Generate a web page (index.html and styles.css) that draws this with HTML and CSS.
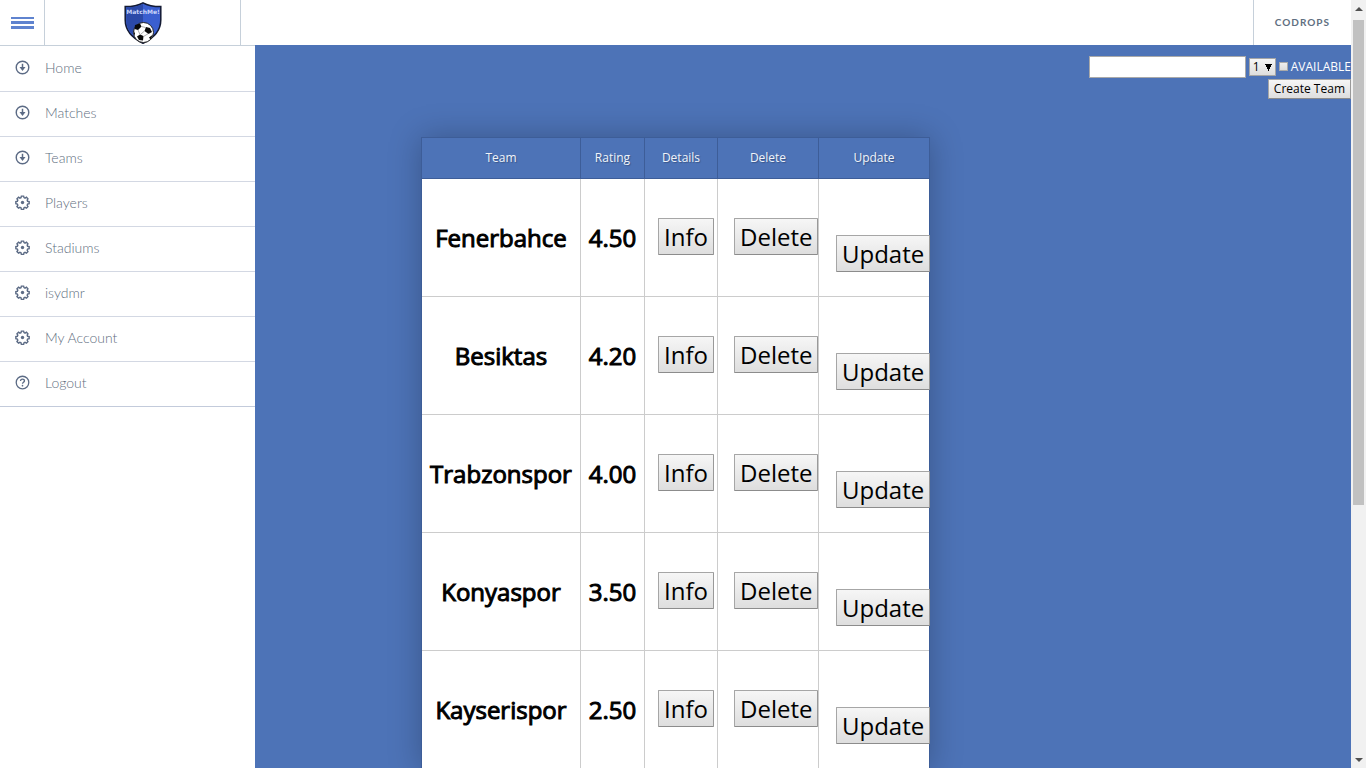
FILE: index.html
```
<!DOCTYPE html>
<html lang="en">
<head>
<meta charset="utf-8">
<title>Teams</title>
<link rel="stylesheet" href="styles.css">
</head>
<body>
<svg class="sprite" aria-hidden="true">
  <symbol id="down" viewBox="0 0 16 16"><circle cx="8" cy="8" r="6.700" fill="none" stroke="currentColor" stroke-width="1.500"/><path d="M7.200 4h1.600v3.400h2.400L8 11.800 4.800 7.400h2.400z" fill="currentColor"/></symbol>
  <symbol id="gear" viewBox="0 0 16 16"><path d="M6.8 1.2h2.4l.4 1.6 1.1.5 1.5-.9 1.6 1.7-.8 1.4.4 1.2 1.7.4v2.2l-1.7.5-.4 1.1.8 1.5-1.6 1.6-1.5-.8-1.1.4-.4 1.7H6.8l-.4-1.7-1.2-.4-1.4.8-1.7-1.6.9-1.5-.5-1.1-1.6-.5V7.1l1.6-.4.5-1.2-.9-1.4 1.7-1.7 1.4.9 1.2-.5z" fill="none" stroke="currentColor" stroke-width="1.500"/><circle cx="8" cy="8" r="1.8" fill="currentColor"/></symbol>
  <symbol id="help" viewBox="0 0 16 16"><circle cx="8" cy="8" r="6.7" fill="none" stroke="currentColor" stroke-width="1.400"/><path d="M5.9 6.5C5.9 3.7 10.2 3.9 10.1 6.3 10 7.7 8 7.7 8 9.4" fill="none" stroke="currentColor" stroke-width="1.400"/><circle cx="8" cy="11.4" r=".9" fill="currentColor"/></symbol>
</svg>
<div class="page">
  <header class="topbar">
    <button class="menu-toggle" aria-label="Menu"><span></span><span></span><span></span></button>
    <a class="brand" href="#">
      <svg viewBox="0 0 38 42" role="img" aria-label="MatchMe!">
        <path d="M19 .8C14 3.6 7.500 4.600 1.200 4.600V18c0 11 7 18 17.800 23.300C30 36 36.800 29 36.800 18V4.600C30.500 4.600 24 3.600 19 .8z" fill="#3a5fd0" stroke="#131a33" stroke-width="1.500"/>
        <path d="M19 2C14 4.500 8 5.500 2.300 5.500V18c0 6 2.200 10.700 6 14.500L19 21z" fill="#2b49a8"/>
        <text x="19" y="12" class="brand-text">MatchMe!</text>
        <circle cx="19.500" cy="30.500" r="10" fill="#fff" stroke="#222" stroke-width="1"/>
        <path d="M11 23l5-1.500 1.500 3-3.500 3.500-3.500-1zM22 25l4 1 2 4-3.500 2-4-3zM16 32.500l3.500 1.500-.5 4.500-4-.500-2-3.500zM9.700 28.500l1.300 3-.8 2.500zM29 32.500l-2.500 5-1.500-2z" fill="#0a0a0a"/>
        <path d="M17.500 24.500l4 1M14 28l2 4.500M20.500 29L16.500 32.500M19.500 34.500l5-3" stroke="#777" stroke-width=".6" fill="none"/>
      </svg>
    </a>
    <a class="codrops" href="#">Codrops</a>
  </header>
  <nav class="sidebar">
    <a href="#"><svg><use href="#down"/></svg>Home</a>
    <a href="#"><svg><use href="#down"/></svg>Matches</a>
    <a href="#"><svg><use href="#down"/></svg>Teams</a>
    <a href="#"><svg><use href="#gear"/></svg>Players</a>
    <a href="#"><svg><use href="#gear"/></svg>Stadiums</a>
    <a href="#"><svg><use href="#gear"/></svg>isydmr</a>
    <a href="#"><svg><use href="#gear"/></svg>My Account</a>
    <a href="#"><svg><use href="#help"/></svg>Logout</a>
  </nav>
  <main class="content">
    <form class="create">
      <div class="fields">
        <input type="text" class="name" aria-label="Team name">
        <select aria-label="Rating"><option>1</option><option>2</option><option>3</option><option>4</option><option>5</option></select>
        <label><input type="checkbox">AVAILABLE</label>
      </div>
      <button type="button" class="btn">Create Team</button>
    </form>
    <table class="teams">
      <colgroup><col class="c-team"><col class="c-rating"><col class="c-info"><col class="c-delete"><col class="c-update"></colgroup>
      <thead><tr><th>Team</th><th>Rating</th><th>Details</th><th>Delete</th><th>Update</th></tr></thead>
      <tbody>
        <tr><td class="strong">Fenerbahce</td><td class="strong">4.50</td><td class="info"><button class="btn big">Info</button></td><td class="delete"><button class="btn big">Delete</button></td><td class="update"><button class="btn big">Update</button></td></tr>
        <tr><td class="strong">Besiktas</td><td class="strong">4.20</td><td class="info"><button class="btn big">Info</button></td><td class="delete"><button class="btn big">Delete</button></td><td class="update"><button class="btn big">Update</button></td></tr>
        <tr><td class="strong">Trabzonspor</td><td class="strong">4.00</td><td class="info"><button class="btn big">Info</button></td><td class="delete"><button class="btn big">Delete</button></td><td class="update"><button class="btn big">Update</button></td></tr>
        <tr><td class="strong">Konyaspor</td><td class="strong">3.50</td><td class="info"><button class="btn big">Info</button></td><td class="delete"><button class="btn big">Delete</button></td><td class="update"><button class="btn big">Update</button></td></tr>
        <tr><td class="strong">Kayserispor</td><td class="strong">2.50</td><td class="info"><button class="btn big">Info</button></td><td class="delete"><button class="btn big">Delete</button></td><td class="update"><button class="btn big">Update</button></td></tr>
      </tbody>
    </table>
  </main>
  <div class="scrollbar" aria-hidden="true"><i class="up"></i><b></b><i class="down"></i></div>
</div>
</body>
</html>
```
FILE: styles.css
```
* { box-sizing: border-box; }
body { margin: 0; font-family: "Open Sans", sans-serif; font-size: 12px; background: #fff; }
.sprite { display: none; }
.page {
  display: grid;
  grid-template-columns: 255px 1fr 15px;
  grid-template-rows: 45px 1fr;
  height: 100vh;
  overflow: hidden;
}

.topbar { grid-column: 1 / 3; display: flex; background: #fff; }
.menu-toggle {
  width: 45px; border: 0; border-right: 1px solid #c6d0da; background: none; padding: 0 10px 0 11px;
  display: flex; flex-direction: column; justify-content: center; gap: 2px;
}
.menu-toggle span { height: 3px; background: #5f83cf; }
.menu-toggle span:first-child { height: 2px; }
.brand { width: 196px; border-right: 1px solid #c6d0da; display: flex; justify-content: center; align-items: center; }
.brand svg { width: 38px; height: 42px; }
.brand-text { font: bold 6px "DejaVu Sans", sans-serif; fill: #c9d4fa; text-anchor: middle; }
.codrops {
  margin-left: auto; padding: 0 21px; border-left: 1px solid #c6d0da;
  font: 700 10px/45px Lato, sans-serif; letter-spacing: 1px; text-transform: uppercase;
  color: #5f6f81; text-decoration: none;
}

.sidebar { grid-column: 1; grid-row: 2; z-index: 1; background: #fff; border-top: 1px solid #c6d0da; padding-top: 1px; }
.sidebar a {
  display: flex; align-items: center; gap: 15px; height: 45px; padding: 0 15px 2px; border-bottom: 1px solid #d3d8e3;
  font: 300 14px/42px Lato, sans-serif; color: #5f6f81; text-decoration: none;
}
.sidebar a:last-child { border-color: #c3cbdb; }
.sidebar svg { width: 15px; height: 15px; color: #5c6b85; margin-bottom: 2px; }

.content { grid-column: 1 / 3; grid-row: 2; background: #4d73b7; padding-top: 11px; overflow: hidden; }
.create { display: flex; flex-direction: column; align-items: flex-end; gap: 1px; height: 81px; color: #fff; }
.fields { display: flex; align-items: center; gap: 3px; height: 22px; }
.name { width: 157px; height: 22px; border: 1px solid #a9a9a9; padding: 1px 4px; background: #fff; font: inherit; }
select {
  appearance: none; width: 27px; height: 18px; padding: 0 3px; border: 1px solid #a6a6a6; border-radius: 0; font: inherit; line-height: 16px; color: #000;
  background: conic-gradient(from -27deg at 50% 100%, #000 54deg, transparent 0) 15px 5px / 7px 7px no-repeat, linear-gradient(#f6f6f6, #dedede);
}
.fields label { display: flex; align-items: center; gap: 3px; line-height: 18px; }
.fields input[type="checkbox"] { appearance: none; width: 9px; height: 9px; margin: 0 0 2px; border: 1px solid #aaa; background: linear-gradient(#eee, #ddd); }
.btn {
  font: 12px/16px "Open Sans", sans-serif; color: #000; padding: 1px 5px; height: 20px; white-space: nowrap;
  border: 1px solid; border-color: #a6a6a6 #999 #8c8c8c #a6a6a6; background: linear-gradient(#f6f6f6, #dedede);
}
.big { display: block; font-size: 24px; line-height: 33px; height: 37px; border-radius: 1px; }

.teams {
  table-layout: fixed; width: 509px; margin: 0 auto; border: 1px solid #3d5d98; border-collapse: separate; border-spacing: 0;
  background: #fff; box-shadow: 0 0 30px rgba(0, 0, 0, .25);
}
.c-team { width: 159px; }
.c-rating { width: 64px; }
.c-info { width: 73px; }
.c-delete { width: 101px; }
.c-update { width: 110px; }
.teams th {
  height: 41px; padding: 0 0 2px; background: #4d73b7; border-right: 1px solid #3d5d98; border-bottom: 1px solid #3d5d98;
  font-weight: 400; color: #f0f4fa; text-shadow: 1px 1px 1px rgba(0, 0, 0, .25);
}
.teams td { height: 118px; padding: 0; border-right: 1px solid #ccc; border-bottom: 1px solid #ccc; }
.teams tr > :last-child { border-right: 0; }
.teams .strong { text-align: center; font-size: 24px; color: #000; -webkit-text-stroke: 1px #000; }
.teams .info { padding: 0 0 2px 13px; }
.teams .delete { padding: 0 0 2px 16px; }
.teams .update { padding: 32px 0 0 17px; }

.scrollbar { grid-column: 3; grid-row: 1 / 3; display: flex; flex-direction: column; align-items: center; background: #f1f1f1; padding: 7px 0 6px; }
.scrollbar i { border: 4px solid transparent; }
.scrollbar .up { border-top: 0; border-bottom-color: #505050; }
.scrollbar .down { border-bottom: 0; border-top-color: #505050; margin-top: auto; }
.scrollbar b { width: 11px; height: 485px; margin-top: 9px; background: #c1c1c1; }
```
